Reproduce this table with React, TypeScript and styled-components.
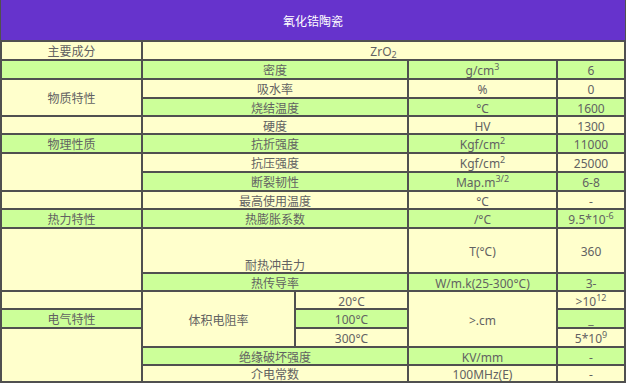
import styled, { createGlobalStyle } from "styled-components";

const GlobalStyle = createGlobalStyle`
  html, body {
    margin: 0;
    padding: 0;
    background: #ffffff;
  }
`;

type Tone = "y" | "g";

const LINE = "#505050";

const Table = styled.table`
  table-layout: fixed;
  border-collapse: separate;
  border-spacing: 0;
  border: 1px solid ${LINE};
  border-top: 0;
  font-family: "Noto Sans", "Noto Sans CJK SC", sans-serif;
  font-size: 12px;
  line-height: 13px;
  color: #626262;
`;

const Col = styled.col<{ $w: number }>`
  width: ${({ $w }) => $w}px;
`;

const Row = styled.tr<{ $h: number }>`
  height: ${({ $h }) => $h}px;
`;

const Title = styled.th`
  border-bottom: 1px solid ${LINE};
  padding: 2px 0 0;
  background: #6633cc;
  color: #ffffff;
  font-weight: normal;
  text-align: center;
  vertical-align: middle;
`;

const Cell = styled.td<{ $tone?: Tone; $bottom?: boolean }>`
  border: 1px solid ${LINE};
  padding: 2px 0 0;
  text-align: center;
  vertical-align: ${({ $bottom }) => ($bottom ? "bottom" : "middle")};
  background: ${({ $tone }) => ($tone === "g" ? "#ccff99" : "#ffffcc")};
  white-space: nowrap;
  overflow: hidden;
`;

const Sup = styled.sup`
  font-size: 9px;
  line-height: 0;
  vertical-align: 5px;
`;

const Sub = styled.sub`
  font-size: 9px;
  line-height: 0;
  vertical-align: -2px;
`;

function App() {
  return (
    <>
      <GlobalStyle />
      <Table>
        <colgroup>
          <Col $w={141} />
          <Col $w={153} />
          <Col $w={113} />
          <Col $w={149} />
          <Col $w={68} />
        </colgroup>
        <tbody>
          <Row $h={41}>
            <Title colSpan={5}>氧化锆陶瓷</Title>
          </Row>
          <Row $h={19}>
            <Cell>主要成分</Cell>
            <Cell colSpan={4}>
              ZrO<Sub>2</Sub>
            </Cell>
          </Row>
          <Row $h={19}>
            <Cell $tone="g" />
            <Cell $tone="g" colSpan={2}>密度</Cell>
            <Cell $tone="g">
              g/cm<Sup>3</Sup>
            </Cell>
            <Cell $tone="g">6</Cell>
          </Row>
          <Row $h={19}>
            <Cell rowSpan={2}>物质特性</Cell>
            <Cell colSpan={2}>吸水率</Cell>
            <Cell>%</Cell>
            <Cell>0</Cell>
          </Row>
          <Row $h={18}>
            <Cell $tone="g" colSpan={2}>烧结温度</Cell>
            <Cell $tone="g">°C</Cell>
            <Cell $tone="g">1600</Cell>
          </Row>
          <Row $h={18}>
            <Cell />
            <Cell colSpan={2}>硬度</Cell>
            <Cell>HV</Cell>
            <Cell>1300</Cell>
          </Row>
          <Row $h={19}>
            <Cell $tone="g">物理性质</Cell>
            <Cell $tone="g" colSpan={2}>抗折强度</Cell>
            <Cell $tone="g">
              Kgf/cm<Sup>2</Sup>
            </Cell>
            <Cell $tone="g">11000</Cell>
          </Row>
          <Row $h={19}>
            <Cell rowSpan={2} />
            <Cell colSpan={2}>抗压强度</Cell>
            <Cell>
              Kgf/cm<Sup>2</Sup>
            </Cell>
            <Cell>25000</Cell>
          </Row>
          <Row $h={19}>
            <Cell $tone="g" colSpan={2}>断裂韧性</Cell>
            <Cell $tone="g">
              Map.m<Sup>3/2</Sup>
            </Cell>
            <Cell $tone="g">6-8</Cell>
          </Row>
          <Row $h={18}>
            <Cell />
            <Cell colSpan={2}>最高使用温度</Cell>
            <Cell>°C</Cell>
            <Cell>-</Cell>
          </Row>
          <Row $h={19}>
            <Cell $tone="g">热力特性</Cell>
            <Cell $tone="g" colSpan={2}>热膨胀系数</Cell>
            <Cell $tone="g">/°C</Cell>
            <Cell $tone="g">
              9.5*10<Sup>-6</Sup>
            </Cell>
          </Row>
          <Row $h={45}>
            <Cell rowSpan={2} />
            <Cell colSpan={2} $bottom>
              耐热冲击力
            </Cell>
            <Cell>T(°C)</Cell>
            <Cell>360</Cell>
          </Row>
          <Row $h={18}>
            <Cell $tone="g" colSpan={2}>热传导率</Cell>
            <Cell $tone="g">W/m.k(25-300°C)</Cell>
            <Cell $tone="g">3-</Cell>
          </Row>
          <Row $h={18}>
            <Cell />
            <Cell rowSpan={3}>体积电阻率</Cell>
            <Cell>20°C</Cell>
            <Cell rowSpan={3}>&gt;.cm</Cell>
            <Cell>
              &gt;10<Sup>12</Sup>
            </Cell>
          </Row>
          <Row $h={19}>
            <Cell $tone="g">电气特性</Cell>
            <Cell $tone="g">100°C</Cell>
            <Cell $tone="g">_</Cell>
          </Row>
          <Row $h={19}>
            <Cell rowSpan={3} />
            <Cell>300°C</Cell>
            <Cell>
              5*10<Sup>9</Sup>
            </Cell>
          </Row>
          <Row $h={18}>
            <Cell $tone="g" colSpan={2}>绝缘破坏强度</Cell>
            <Cell $tone="g">KV/mm</Cell>
            <Cell $tone="g">-</Cell>
          </Row>
          <Row $h={17}>
            <Cell colSpan={2}>介电常数</Cell>
            <Cell>100MHz(E)</Cell>
            <Cell>-</Cell>
          </Row>
        </tbody>
      </Table>
    </>
  );
}

export default App;
